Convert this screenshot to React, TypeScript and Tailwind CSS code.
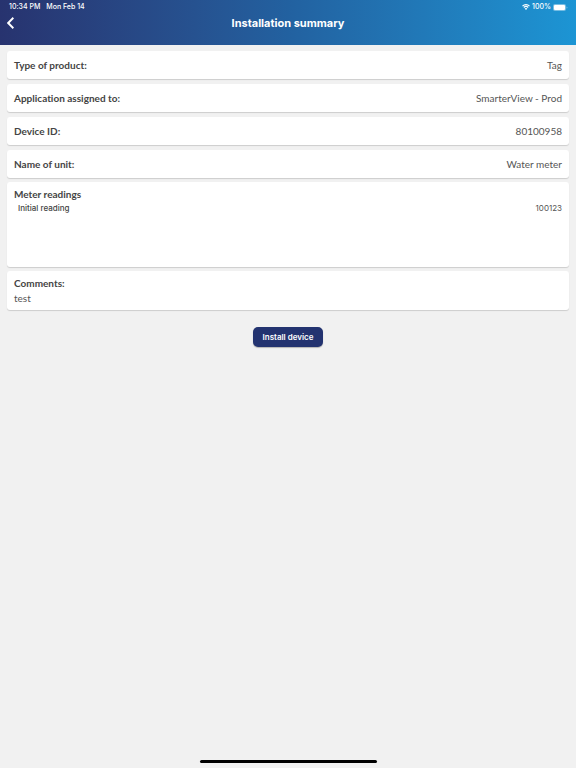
import React from 'react';

const details = [
  { label: 'Type of product:', value: 'Tag' },
  { label: 'Application assigned to:', value: 'SmarterView - Prod' },
  { label: 'Device ID:', value: '80100958' },
  { label: 'Name of unit:', value: 'Water meter' },
];

const card = 'rounded-[3px] bg-white px-[7px] shadow-[0_1px_1px_rgba(0,0,0,0.15)]';

function StatusBar() {
  return (
    <div className="flex h-[14px] items-center justify-between pr-2 pl-[9px] text-[7px] leading-[14px] font-medium">
      <div className="flex gap-[6px]">
        <span>10:34 PM</span>
        <span>Mon Feb 14</span>
      </div>
      <div className="flex items-center gap-[2px]">
        <svg className="h-[6px] w-[8px]" viewBox="0 0 16 12" fill="none" stroke="currentColor" strokeWidth="2.3" aria-hidden="true">
          <path d="M1 4.3C5 .3 11 .3 15 4.3M3.6 7C6.2 4.5 9.8 4.5 12.4 7" />
          <path d="M8 11.8 5.2 9q2.8-2 5.6 0z" fill="currentColor" stroke="none" />
        </svg>
        <span>100%</span>
        <svg className="h-[7px] w-[15px]" viewBox="0 0 15 7" aria-hidden="true">
          <rect width="13" height="7" rx="2" fill="currentColor" fillOpacity=".4" />
          <rect x="1" y="1" width="11" height="5" rx="1" fill="currentColor" />
          <path d="M13.6 2.4v2.2q.8-.3.8-1.1t-.8-1.1z" fill="currentColor" fillOpacity=".5" />
        </svg>
      </div>
    </div>
  );
}

export default function App() {
  return (
    <div className="flex min-h-screen flex-col bg-[#f1f1f1] font-['Lato','Liberation_Sans',sans-serif] text-[#555] [font-variant-ligatures:none]">
      <header className="h-[45px] bg-linear-to-r from-[#27336f] via-[#2261a0] to-[#1c95d4] font-['Inter','Liberation_Sans',sans-serif] text-white">
        <StatusBar />
        <div className="grid grid-cols-[1fr_auto_1fr] items-center">
          <button type="button" aria-label="Back" className="flex h-[18px] w-5 items-center pl-[7px]">
            <svg className="h-[12px] w-[7px]" viewBox="0 0 7 12" fill="none" stroke="currentColor" strokeWidth="2" aria-hidden="true">
              <path d="M6.4.8 1.2 6l5.2 5.2" />
            </svg>
          </button>
          <h1 className="text-[11px] leading-[18px] font-bold">Installation summary</h1>
        </div>
      </header>

      <main className="flex flex-1 flex-col gap-1 px-[7px] pt-[6px]">
        <dl className="flex flex-col gap-[5px]">
          {details.map(({ label, value }) => (
            <div key={label} className={`${card} flex h-[28px] items-center justify-between text-[10px]`}>
              <dt className="font-bold text-[#444]">{label}</dt>
              <dd>{value}</dd>
            </div>
          ))}
        </dl>
        <section className={`${card} h-[85px] pt-[5px]`}>
          <h2 className="text-[10px] leading-[14px] font-bold text-[#444]">Meter readings</h2>
          <dl className="flex justify-between pl-1 font-['Inter','Liberation_Sans',sans-serif] text-[8px] leading-[14px]">
            <dt className="font-medium text-[#444]">Initial reading</dt>
            <dd>100123</dd>
          </dl>
        </section>
        <section className={`${card} pt-[5px] pb-1 text-[10px] leading-[15px]`}>
          <h2 className="font-bold text-[#444]">Comments:</h2>
          <p>test</p>
        </section>
        <button type="button" className="mt-[13px] h-[20px] w-[70px] self-center rounded-[5px] bg-[#233370] font-['Inter','Liberation_Sans',sans-serif] text-[8px] font-semibold text-white shadow-[0_1px_1px_rgba(0,0,0,0.25)]">
          Install device
        </button>
      </main>

      <div className="mx-auto mb-[5px] h-[3px] w-[177px] rounded-full bg-black" />
    </div>
  );
}
